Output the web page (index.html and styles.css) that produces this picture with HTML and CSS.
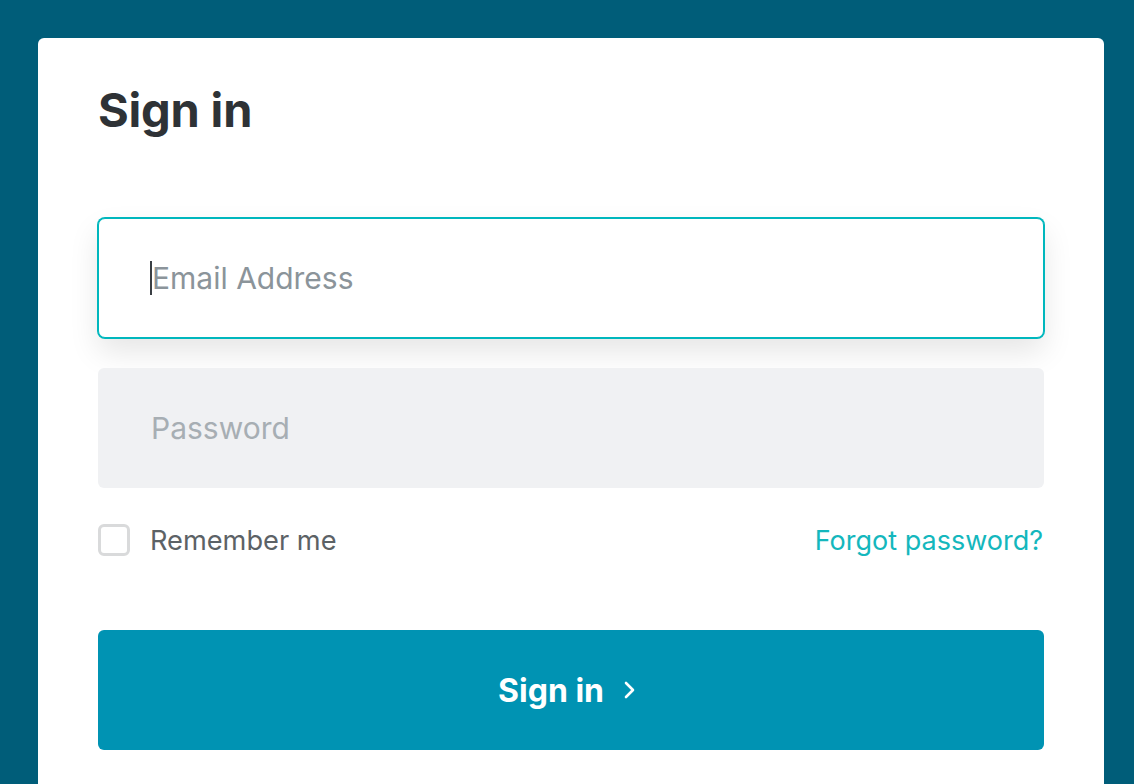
FILE: index.html
```html
<!DOCTYPE html>
<html lang="en">
<head>
<meta charset="utf-8">
<title>Sign in</title>
<link rel="stylesheet" href="styles.css">
</head>
<body>
<main class="card">
  <h1 class="title">Sign in</h1>
  <form class="form">
    <div class="field field-focus">
      <span class="caret"></span><span class="placeholder placeholder-email">Email Address</span>
    </div>
    <div class="field field-muted">
      <span class="placeholder placeholder-pass">Password</span>
    </div>
    <div class="options">
      <label class="remember"><span class="checkbox"></span><span>Remember me</span></label>
      <a class="forgot" href="#">Forgot password?</a>
    </div>
    <button type="button" class="submit">
      <span>Sign in</span>
      <svg class="chevron" width="14" height="20" viewBox="0 0 14 20" aria-hidden="true"><path d="M3 3 L10 10 L3 17" fill="none" stroke="#fff" stroke-width="2.6" stroke-linecap="round" stroke-linejoin="round"/></svg>
    </button>
  </form>
</main>
</body>
</html>
```
FILE: styles.css
```css
* { box-sizing: border-box; }
html, body { margin: 0; height: 100%; }
body {
  background: #005d79;
  padding: 38px 30px 0 38px;
  font-family: Inter, "Noto Sans", sans-serif;
  overflow: hidden;
}
.card {
  background: #ffffff;
  width: 1066px;
  height: 746px;
  border-radius: 6px 6px 0 0;
  padding: 44px 60px 0 60px;
}
.title {
  margin: 0;
  font-size: 47px;
  font-weight: 700;
  line-height: 56px;
  color: #2e3236;
  letter-spacing: -0.2px;
}
.form {
  margin-top: 80px;
  display: flex;
  flex-direction: column;
}
.field {
  height: 120px;
  border-radius: 7px;
  display: flex;
  align-items: center;
  padding-left: 53px;
}
.field-focus {
  background: #fff;
  border: 1px solid #00b7bd;
  box-shadow: 0 0 0 1px #00b7bd, 0 14px 30px rgba(0, 0, 0, 0.1);
  padding-left: 52px;
}
.field-muted {
  margin-top: 30px;
  background: #f0f1f3;
  border-radius: 6px;
}
.caret {
  width: 2px;
  height: 34px;
  background: #3a3f44;
  margin-left: -1px;
}
.placeholder {
  font-size: 30px;
  font-weight: 400;
  line-height: 36px;
}
.placeholder-email { color: #8b949a; }
.placeholder-pass { color: #a7aeb3; }
.options {
  margin-top: 36px;
  display: flex;
  justify-content: space-between;
  align-items: center;
  height: 32px;
}
.remember {
  display: flex;
  align-items: center;
  gap: 20px;
  font-size: 27.2px;
  color: #5c6266;
}
.checkbox {
  width: 32px;
  height: 32px;
  border: 3px solid #d9dadb;
  border-radius: 6px;
  background: #fff;
}
.forgot {
  font-size: 27px;
  color: #14b7bd;
  text-decoration: none;
  margin-right: 1px;
}
.submit {
  margin-top: 74px;
  height: 120px;
  border: 0;
  border-radius: 6px;
  background: #0093b3;
  color: #fff;
  font-family: inherit;
  font-size: 32px;
  font-weight: 700;
  display: flex;
  align-items: center;
  justify-content: center;
  gap: 19px;
  padding: 0 7px 0 0;
}
.chevron { display: block; }
```
